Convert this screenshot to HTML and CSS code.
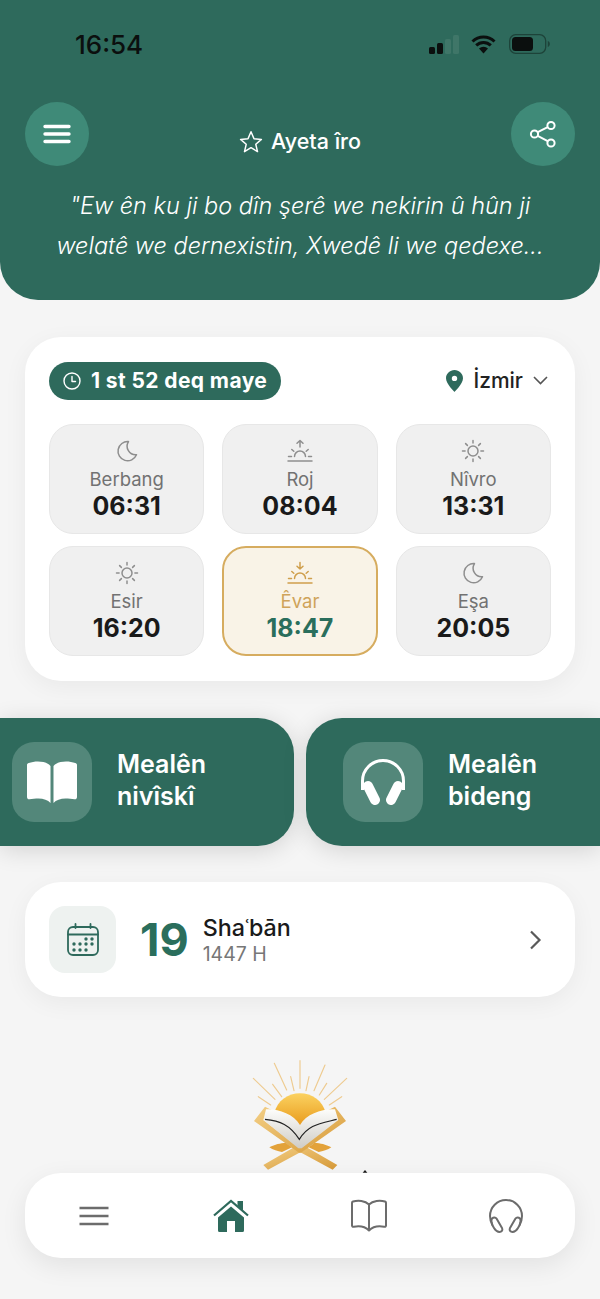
FILE: index.html
```html
<!DOCTYPE html>
<html lang="en">
<head>
    <meta charset="UTF-8">
    <meta name="viewport" content="width=device-width, initial-scale=1.0">
    <title>Ayeta îro</title>
    <link rel="stylesheet" href="styles.css">
</head>
<body>
    <svg class="defs" width="0" height="0">
        <symbol id="moon" viewBox="0 0 24 24"><path d="M13.500 2.600a9.600 9.600 0 1 0 8 13.200A8.600 8.600 0 0 1 13.500 2.600z" fill="none" stroke="currentColor" stroke-width="1.500" stroke-linejoin="round"/></symbol>
        <symbol id="sun" viewBox="0 0 24 24"><g fill="none" stroke="currentColor" stroke-width="1.500" stroke-linecap="round"><circle cx="12" cy="12" r="5"/><path d="M12 1.500v2.600M12 19.900v2.600M1.500 12h2.600M19.900 12h2.600M4.600 4.600l1.800 1.800M17.600 17.600l1.800 1.800M4.600 19.400l1.800-1.800M17.600 6.400l1.800-1.800"/></g></symbol>
        <symbol id="sunrise" viewBox="0 0 26 24"><g fill="none" stroke="currentColor" stroke-width="1.500" stroke-linecap="round" stroke-linejoin="round"><path d="M13 8V1.500M10 4.200l3-2.700 3 2.700M7.500 17.500a5.500 5.500 0 0 1 11 0M1.500 17.500h3M21.500 17.500h3M4.800 10.500l2 1.800M21.200 10.500l-2 1.800M1 22h24"/></g></symbol>
        <symbol id="sunset" viewBox="0 0 26 24"><g fill="none" stroke="currentColor" stroke-width="1.500" stroke-linecap="round" stroke-linejoin="round"><path d="M13 1.500V8M10 5.300l3 2.700 3-2.700M7.500 17.500a5.500 5.500 0 0 1 11 0M1.500 17.500h3M21.500 17.500h3M4.800 10.500l2 1.800M21.200 10.500l-2 1.800M1 22h24"/></g></symbol>
    </svg>

    <header class="hero">
        <div class="status-bar">
            <span class="status-time">16:54</span>
            <div class="status-icons">
                <svg width="30" height="19" viewBox="0 0 30 19">
                    <rect x="0" y="12" width="6" height="7" rx="1.500" fill="#0b0f0e"/>
                    <rect x="8" y="8" width="6" height="11" rx="1.500" fill="#0b0f0e"/>
                    <rect x="16" y="4" width="6" height="15" rx="1.500" fill="#3f7668"/>
                    <rect x="24" y="0" width="6" height="19" rx="1.500" fill="#3f7668"/>
                </svg>
                <svg class="wifi" width="25" height="19" viewBox="0 0 25 19">
                    <path d="M1.500 6.500a15.800 15.800 0 0 1 22 0M5.200 10.400a10.500 10.500 0 0 1 14.600 0" fill="none" stroke="#0b0f0e" stroke-width="3"/>
                    <path d="M8 13.500a6.400 6.400 0 0 1 9 0l-4.500 5z" fill="#0b0f0e"/>
                </svg>
                <svg class="battery" width="41" height="20" viewBox="0 0 41 20">
                    <rect x="0.700" y="0.700" width="36" height="18.600" rx="6" fill="none" stroke="#1d4339" stroke-width="1.300"/>
                    <rect x="3" y="3" width="21" height="14" rx="3.500" fill="#0b0f0e"/>
                    <path d="M38.800 7v6c1.300-.4 2-1.600 2-3s-.7-2.600-2-3z" fill="#1d4339"/>
                </svg>
            </div>
        </div>
        <div class="hero-top">
            <button class="round-btn" aria-label="Menu">
                <svg width="28" height="20" viewBox="0 0 28 20"><path d="M2 2.500h24M2 10h24M2 17.500h24" stroke="#fff" stroke-width="3.400" stroke-linecap="round"/></svg>
            </button>
            <div class="hero-title">
                <svg width="24" height="23" viewBox="0 0 24 23"><path d="M12 1.800l3 6.900 7.400.7-5.600 4.900 1.700 7.300-6.500-3.900-6.500 3.900 1.700-7.300-5.600-4.900 7.400-.7z" fill="none" stroke="#fff" stroke-width="1.500" stroke-linejoin="round"/></svg>
                <span>Ayeta îro</span>
            </div>
            <button class="round-btn" aria-label="Share">
                <svg width="28" height="28" viewBox="0 0 28 28"><g fill="none" stroke="#fff" stroke-width="2"><circle cx="22" cy="5.500" r="3.600"/><circle cx="22" cy="23" r="3.600"/><circle cx="5.500" cy="14" r="3.600"/><path d="M8.700 12.200l10-5M8.700 15.800l10 5.300"/></g></svg>
            </button>
        </div>
        <p class="quote">"Ew ên ku ji bo dîn şerê we nekirin û hûn ji<br>welatê we dernexistin, Xwedê li we qedexe...</p>
    </header>

    <section class="card prayer-card">
        <div class="prayer-head">
            <div class="countdown">
                <svg width="18" height="18" viewBox="0 0 18 18"><g fill="none" stroke="#fff" stroke-width="1.400" stroke-linecap="round" stroke-linejoin="round"><circle cx="9" cy="9" r="8"/><path d="M9 4.500V9.500h3.500"/></g></svg>
                <span>1 st 52 deq maye</span>
            </div>
            <div class="city">
                <svg class="pin" width="17" height="22" viewBox="0 0 17 22"><path fill-rule="evenodd" d="M8.500 0C3.800 0 0 3.700 0 8.300 0 14 8.500 22 8.500 22S17 14 17 8.300C17 3.700 13.200 0 8.500 0zm0 5.700a2.700 2.700 0 1 1 0 5.400 2.700 2.700 0 0 1 0-5.400z" fill="#2e6a5c"/></svg>
                <span>İzmir</span>
                <svg width="15" height="9" viewBox="0 0 15 9"><path d="M1 1l6.500 6.500L14 1" fill="none" stroke="#555" stroke-width="1.600"/></svg>
            </div>
        </div>
        <div class="prayer-grid">
            <div class="tile">
                <svg class="tile-icon" width="24" height="24"><use href="#moon"/></svg>
                <span class="tile-name">Berbang</span>
                <span class="tile-time">06:31</span>
            </div>
            <div class="tile">
                <svg class="tile-icon" width="26" height="24"><use href="#sunrise"/></svg>
                <span class="tile-name">Roj</span>
                <span class="tile-time">08:04</span>
            </div>
            <div class="tile">
                <svg class="tile-icon" width="24" height="24"><use href="#sun"/></svg>
                <span class="tile-name">Nîvro</span>
                <span class="tile-time">13:31</span>
            </div>
            <div class="tile">
                <svg class="tile-icon" width="24" height="24"><use href="#sun"/></svg>
                <span class="tile-name">Esir</span>
                <span class="tile-time">16:20</span>
            </div>
            <div class="tile tile-active">
                <svg class="tile-icon" width="26" height="24"><use href="#sunset"/></svg>
                <span class="tile-name">Êvar</span>
                <span class="tile-time">18:47</span>
            </div>
            <div class="tile">
                <svg class="tile-icon" width="24" height="24"><use href="#moon"/></svg>
                <span class="tile-name">Eşa</span>
                <span class="tile-time">20:05</span>
            </div>
        </div>
    </section>

    <section class="actions">
        <a class="action action-left">
            <span class="action-icon">
                <svg width="50" height="43" viewBox="0 0 50 43"><path d="M23.500 5v37c-2.500-3-7-4.500-12-4.500-3 0-6.500.3-9 .8-1.300.2-2.500-.8-2.500-2.300V4C0 3 .7 2.200 1.800 2 8-.3 19-.5 23.500 5zM26.500 5v37c2.500-3 7-4.500 12-4.500 3 0 6.500.3 9 .8 1.300.2 2.500-.8 2.500-2.300V4c0-1-.7-1.800-1.800-2C42-.3 31-.5 26.500 5z" fill="#fff"/></svg>
            </span>
            <span class="action-label">Mealên<br>nivîskî</span>
        </a>
        <a class="action action-right">
            <span class="action-icon">
                <svg width="46" height="46" viewBox="0 0 46 46"><path d="M2.500 31V22a20.500 20.500 0 0 1 41 0v9" fill="none" stroke="#fff" stroke-width="3"/><path d="M8 27l7 14M38 27l-7 14" stroke="#fff" stroke-width="10" stroke-linecap="round"/></svg>
            </span>
            <span class="action-label">Mealên<br>bideng</span>
        </a>
    </section>

    <section class="card date-card">
        <span class="date-icon">
            <svg width="32" height="33" viewBox="0 0 32 33">
                <g fill="none" stroke="#2e6a5c" stroke-width="1.800" stroke-linecap="round"><rect x="1" y="4" width="30" height="28" rx="5"/><path d="M1 11.500h30M8.500 1v4M23.500 1v4"/></g>
                <g fill="#2e6a5c"><circle cx="19" cy="16" r="1.700"/><circle cx="25" cy="16" r="1.700"/><circle cx="7" cy="21" r="1.700"/><circle cx="13" cy="21" r="1.700"/><circle cx="19" cy="21" r="1.700"/><circle cx="25" cy="21" r="1.700"/><circle cx="7" cy="27" r="1.700"/><circle cx="13" cy="27" r="1.700"/><circle cx="19" cy="27" r="1.700"/></g>
            </svg>
        </span>
        <span class="date-day">19</span>
        <div class="date-text">
            <span class="date-month">Shaʿbān</span>
            <span class="date-year">1447 H</span>
        </div>
        <svg class="date-arrow" width="13" height="20" viewBox="0 0 13 20"><path d="M2 1.500L10.500 10 2 18.500" fill="none" stroke="#5a5a5a" stroke-width="2.200"/></svg>
    </section>

    <div class="logo">
        <svg width="150" height="130" viewBox="0 0 450 390">
            <defs>
                <linearGradient id="dome" x1="0" y1="0" x2="0" y2="1"><stop offset="0" stop-color="#fbd261"/><stop offset="1" stop-color="#e8991a"/></linearGradient>
                <linearGradient id="stand" x1="0" y1="0" x2="1" y2="1"><stop offset="0" stop-color="#f3cf86"/><stop offset="1" stop-color="#d79a38"/></linearGradient>
                <linearGradient id="page" x1="0" y1="0" x2="0" y2="1"><stop offset="0" stop-color="#fdfdfb"/><stop offset="1" stop-color="#cfccc6"/></linearGradient>
            </defs>
            <path d="M210 32v83M133 40l37 80M285 45l-33 77M70 85l65 63M128 103l27 37M182 80l10 42M237 80l-9 42M290 100l-22 35M350 85l-67 63M85 140l37 25M335 140l-37 25" stroke="#eecb90" stroke-width="3.500" stroke-linecap="round"/>
            <path d="M133 190c8-38 42-60 77-60s69 22 77 60l-77 40z" fill="url(#dome)"/>
            <path d="M100 345l100-58 22 14-108 58zM322 345l-100-58-22 14 108 58z" fill="url(#stand)"/>
            <path d="M118 292c18-10 32-12 50-14l18 14-30 14c-12-2-28-6-38-14zM304 292c-18-10-32-12-50-14l-18 14 30 14c12-2 28-6 38-14z" fill="#e3a23a"/>
            <path d="M72 213l33-43 20 10-25 30 110 85 110-85-25-30 20-10 33 43-135 95h-6z" fill="url(#stand)"/>
            <path d="M108 178c32-3 82 12 102 47 20-35 70-50 105-47l10 32-110 85h-10l-105-85z" fill="url(#page)"/>
            <path d="M105 208c45 4 75 17 103 60 27-43 57-46 112-60" fill="none" stroke="#222" stroke-width="3.500"/>
            <path d="M398 368l7-8 7 8z" fill="#1a1a1a"/>
        </svg>
    </div>

    <nav class="tabbar">
        <svg width="30" height="20" viewBox="0 0 30 20"><path d="M.5 2h29M.5 10h29M.5 18h29" stroke="#6c6c6c" stroke-width="2.400"/></svg>
        <svg width="36" height="34" viewBox="0 0 36 34">
            <path d="M18 7.500l13 11V31.500a1.500 1.500 0 0 1-1.500 1.500H22V22h-8v11H6.500A1.500 1.500 0 0 1 5 31.500v-13z" fill="#2e6a5c"/>
            <path d="M1 16.500L18 2l17 14.500" fill="none" stroke="#2e6a5c" stroke-width="2.200"/>
            <path d="M24.500 2H30v9.500l-5.500-4.700z" fill="#2e6a5c"/>
        </svg>
        <svg width="36" height="34" viewBox="0 0 36 34"><path d="M18 5.500v26M18 5.500C14 1.500 7 1 2 2.500a1.500 1.500 0 0 0-1 1.500v22.500c0 1 .8 1.500 1.800 1.300 5-1 11-.5 15.200 3.700 4.200-4.200 10.200-4.700 15.200-3.700 1 .2 1.800-.3 1.800-1.300V4a1.500 1.500 0 0 0-1-1.500C29 1 22 1.500 18 5.500z" fill="none" stroke="#6c6c6c" stroke-width="2" stroke-linejoin="round"/></svg>
        <svg width="34" height="34" viewBox="0 0 34 34"><g fill="none" stroke="#6c6c6c" stroke-width="2" stroke-linejoin="round"><path d="M3.500 26C1 22 1 20 1 17a16 16 0 0 1 32 0c0 3 0 5-2.500 9"/><path d="M3 19.500c1.500-1.500 3.500-1.500 4.500 0l5.500 9.500c1 2.500-.5 4-2.500 4S6.500 31.500 5 29c-2-3-3.500-6.500-2-9.500zM31 19.500c-1.500-1.500-3.500-1.500-4.500 0L21 29c-1 2.500.5 4 2.500 4s4-1.500 5.500-4c2-3 3.500-6.500 2-9.500z"/></g></svg>
    </nav>
</body>
</html>
```

FILE: styles.css
```css
* {
    box-sizing: border-box;
}

body {
    font-family: Inter, "Noto Sans", sans-serif;
    background: #f5f5f5;
    color: #1a1a1a;
    margin: 0;
    height: 1299px;
    overflow: hidden;
    position: relative;
}

.defs {
    position: absolute;
}

/* Header */
.hero {
    background: #2e6a5c;
    height: 300px;
    padding: 28px 25px 0;
    border-radius: 0 0 38px 38px;
    color: #fff;
}

.status-bar {
    display: flex;
    justify-content: space-between;
    align-items: center;
    height: 32px;
    padding: 0 25px 0 50px;
}

.status-time {
    color: #0b0f0e;
    font-size: 26px;
    font-weight: 500;
}

.status-icons {
    display: flex;
    align-items: center;
    gap: 12px;
}

.wifi {
    margin-right: 1px;
}

.hero-top {
    display: flex;
    justify-content: space-between;
    margin-top: 42px;
}

.round-btn {
    width: 64px;
    height: 64px;
    border: none;
    border-radius: 50%;
    background: #3f8a78;
    padding: 0;
    display: flex;
    align-items: center;
    justify-content: center;
}

.hero-title {
    display: flex;
    align-items: center;
    gap: 8px;
    margin-top: 23px;
    height: 32px;
    font-size: 21.5px;
    font-weight: 500;
    color: #fff;
}

.quote {
    margin: 20px 0 0;
    font-size: 23.5px;
    font-weight: 300;
    font-style: italic;
    line-height: 40px;
    text-align: center;
    white-space: nowrap;
    color: #fff;
}

/* Cards */
.card {
    background: #fff;
    border-radius: 36px;
    margin: 0 25px;
    box-shadow: 0 6px 24px rgba(0, 0, 0, 0.05);
}

.prayer-card {
    margin-top: 37px;
    height: 344px;
    padding: 24px;
}

.prayer-head {
    display: flex;
    justify-content: space-between;
    align-items: center;
    height: 39px;
    padding-right: 3px;
}

.countdown {
    display: flex;
    align-items: center;
    gap: 10px;
    height: 38px;
    padding: 0 14px;
    border-radius: 19px;
    background: #2e6a5c;
    color: #fff;
    font-size: 21px;
    font-weight: 700;
    letter-spacing: 0.4px;
}

.city {
    display: flex;
    align-items: center;
    gap: 10px;
    font-size: 21px;
    font-weight: 500;
    color: #222;
}

.prayer-grid {
    display: grid;
    grid-template-columns: repeat(3, 1fr);
    grid-auto-rows: 110px;
    gap: 12px 18px;
    margin-top: 24px;
}

.tile {
    display: flex;
    flex-direction: column;
    align-items: center;
    background: #f0f0f0;
    border: 1px solid #e7e7e7;
    border-radius: 24px;
    padding-top: 14px;
    color: #8e8e8e;
}

.tile-icon {
    flex: none;
}

.tile-name {
    margin-top: 4px;
    font-size: 18.5px;
    line-height: 24px;
    color: #727272;
}

.tile-time {
    font-size: 25px;
    font-weight: 700;
    line-height: 30px;
    color: #1a1a1a;
}

.tile-active {
    background: #f9f3e7;
    border: 2px solid #d6ac5f;
    color: #cf9f4c;
    padding-top: 13px;
}

.tile-active .tile-name {
    color: #cfa35a;
}

.tile-active .tile-time {
    color: #2a6e5c;
}

/* Action cards */
.actions {
    display: flex;
    gap: 12px;
    margin-top: 37px;
}

.action {
    display: flex;
    align-items: center;
    flex: 0 0 294px;
    height: 128px;
    background: #2e6a5c;
    color: #fff;
    box-shadow: 0 4px 24px rgba(0, 0, 0, 0.14);
}

.action-left {
    padding-left: 12px;
    border-radius: 0 36px 36px 0;
}

.action-right {
    padding-left: 37px;
    border-radius: 36px 0 0 36px;
}

.action-icon {
    display: flex;
    align-items: center;
    justify-content: center;
    width: 80px;
    height: 80px;
    flex: none;
    background: #53877a;
    border-radius: 22px;
}

.action-label {
    margin-left: 25px;
    padding-bottom: 4px;
    font-size: 25px;
    font-weight: 600;
    line-height: 32px;
}

/* Date */
.date-card {
    display: flex;
    align-items: center;
    margin-top: 36px;
    height: 115px;
    padding: 0 33px 0 24px;
}

.date-icon {
    display: flex;
    align-items: center;
    justify-content: center;
    width: 67px;
    height: 67px;
    background: #eef2f0;
    border-radius: 16px;
}

.date-day {
    margin-left: 24px;
    font-size: 45px;
    font-weight: 700;
    color: #2a6e5c;
}

.date-text {
    display: flex;
    flex-direction: column;
    margin-left: 14px;
}

.date-month {
    font-size: 23.3px;
    font-weight: 500;
    line-height: 28px;
}

.date-year {
    font-size: 19.5px;
    line-height: 24px;
    color: #777;
}

.date-arrow {
    margin-left: auto;
}

/* Logo, runs under the tab bar */
.logo {
    display: flex;
    margin-top: 53px;
    padding-left: 230px;
}

/* Tab bar */
.tabbar {
    position: absolute;
    left: 25px;
    top: 1173px;
    width: 550px;
    height: 85px;
    display: grid;
    grid-template-columns: repeat(4, 1fr);
    justify-items: center;
    align-items: center;
    background: #fff;
    border-radius: 36px;
    box-shadow: 0 8px 26px rgba(0, 0, 0, 0.08);
}
```
